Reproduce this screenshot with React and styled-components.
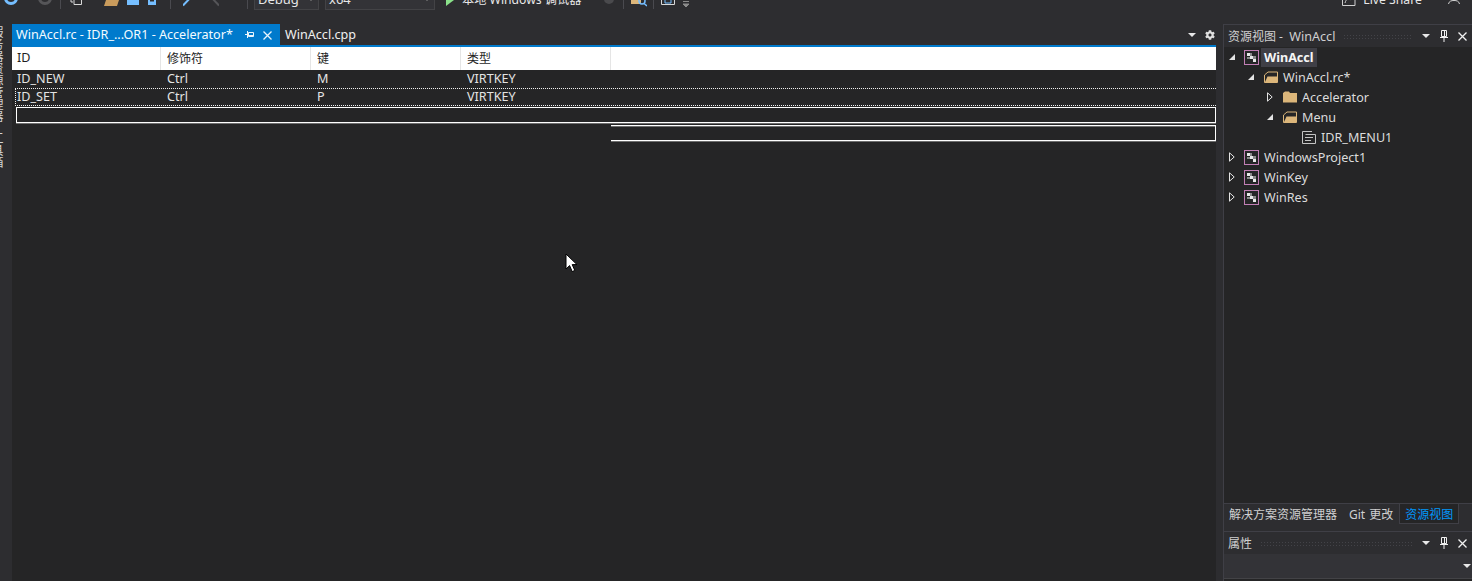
import React from "react";
import styled, { createGlobalStyle } from "styled-components";
import { FaCog } from "react-icons/fa";

const GlobalStyle = createGlobalStyle`
  html, body {
    margin: 0;
    padding: 0;
    background: #2d2d30;
  }
  * {
    box-sizing: border-box;
  }
`;

const columns = ["ID", "修饰符", "键", "类型"];
const accelerators = [
  { id: "ID_NEW", mod: "Ctrl", key: "M", type: "VIRTKEY" },
  { id: "ID_SET", mod: "Ctrl", key: "P", type: "VIRTKEY", focused: true },
];

const Arrow = ({ open }) => (
  <svg width="8" height="10" viewBox="0 0 8 10">
    {open ? (
      <path d="M7 2V8H1Z" fill="#e4e4e4" />
    ) : (
      <path d="M1.5 0.8L6.2 5L1.5 9.2Z" fill="none" stroke="#e4e4e4" />
    )}
  </svg>
);

const ProjectIcon = () => (
  <svg width="15" height="15" viewBox="0 0 15 15">
    <rect x="0.5" y="0.5" width="14" height="14" fill="#252526" stroke="#c27fb5" />
    <path d="M3 3h3v3H3zM6 6h3v3H6zM9 9h3v3H9z" fill="#e8e8e8" />
    <path d="M6 3h2v3H6zM9 6h3v3H9zM3 7h3v2H3z" fill="#8a8a8a" />
  </svg>
);

const OpenFolder = () => (
  <svg width="14" height="12" viewBox="0 0 14 12">
    <path d="M0.5 11.5V4L4 1H13.5V11.5Z" fill="none" stroke="#dcb67a" />
    <path d="M1 11L3.5 5.5H13V11Z" fill="#dcb67a" />
  </svg>
);

const ClosedFolder = () => (
  <svg width="14" height="12" viewBox="0 0 14 12">
    <path d="M0 11.5V2L2 0.5H6L7 2H14V11.5Z" fill="#dcb67a" />
  </svg>
);

const MenuIcon = () => (
  <svg width="14" height="13" viewBox="0 0 14 13">
    <path d="M0.5 0.5H10M3.5 3.5H13.5V12.5H0.5V0.5M3 6.5H11M3 9.5H9" fill="none" stroke="#c4c4c4" />
  </svg>
);

const DropArrow = ({ color = "#e8e8e8" }) => (
  <svg width="8" height="4" viewBox="0 0 8 4">
    <path d="M0 0H8L4 4Z" fill={color} />
  </svg>
);

const PinIcon = () => (
  <svg width="8" height="12" viewBox="0 0 8 12">
    <path d="M1.5 0.5H6.5V6.5H1.5ZM0 7.5H8M4 8V12M4.5 1V6" fill="none" stroke="#f1f1f1" />
  </svg>
);

const TabPinIcon = () => (
  <svg width="10" height="8" viewBox="0 0 10 8">
    <path d="M3.5 1.5H8.5V5.5H3.5ZM2.5 0V7M0 3.5H3M3.5 4.5H8.5" fill="none" stroke="#e8f4fc" />
  </svg>
);

const CloseIcon = ({ size = 9, color = "#f1f1f1" }) => (
  <svg width={size} height={size} viewBox="0 0 9 9">
    <path d="M0.5 0.5L8.5 8.5M8.5 0.5L0.5 8.5" stroke={color} strokeWidth="1.3" />
  </svg>
);

const Cursor = () => (
  <svg width="13" height="20" viewBox="0 0 13 20">
    <path
      d="M1 1V16L4.6 12.6L7.2 18.6L9.8 17.4L7.2 11.6H12Z"
      fill="#fff"
      stroke="#000"
      strokeWidth="1"
    />
  </svg>
);

const Page = styled.div`
  position: relative;
  display: flex;
  flex-direction: column;
  width: 1472px;
  height: 581px;
  overflow: hidden;
  background: #2d2d30;
  color: #f1f1f1;
  font-family: "Noto Sans", "Noto Sans CJK SC", sans-serif;
  font-size: 12px;
`;

const Toolbar = styled.div`
  flex: 0 0 24px;
  overflow: hidden;
`;

const ToolbarRow = styled.div`
  display: flex;
  align-items: center;
  height: 20px;
  margin-top: -10px;
`;

const ToolSlot = styled.div`
  display: flex;
  align-items: center;
  justify-content: center;
  flex: 0 0 auto;
  width: ${(p) => p.$w}px;
  margin-left: ${(p) => p.$ml || 0}px;
`;

const ToolSep = styled.div`
  flex: 0 0 1px;
  height: 18px;
  margin-left: ${(p) => p.$ml}px;
  background: #4a4a4f;
`;

const Combo = styled.div`
  flex: 0 0 auto;
  display: flex;
  align-items: center;
  justify-content: space-between;
  width: ${(p) => p.$w}px;
  height: 20px;
  margin-left: ${(p) => p.$ml}px;
  padding: 0 3px 2px 3px;
  border: 1px solid #434346;
  background: #333337;
  color: #e6e6e6;
  font-size: 13px;
`;

const ToolText = styled.span`
  flex: 0 0 auto;
  margin-left: ${(p) => p.$ml}px;
  padding-bottom: 2px;
  color: ${(p) => p.$color || "#e8e8e8"};
  font-size: 12.2px;
  white-space: nowrap;
`;

const Workspace = styled.div`
  display: flex;
  flex: 1;
  min-height: 0;
`;

const SideStrip = styled.div`
  flex: 0 0 12px;
  overflow: hidden;
  padding-top: 2px;
`;

const SideLabel = styled.div`
  writing-mode: vertical-rl;
  width: 16px;
  margin-left: -12px;
  margin-bottom: 10px;
  color: #d4d4d4;
  font-size: 12px;
  line-height: 16px;
`;

const Editor = styled.div`
  flex: 0 0 1204px;
  display: flex;
  flex-direction: column;
`;

const TabStrip = styled.div`
  display: flex;
  align-items: center;
  flex: 0 0 23px;
  border-bottom: 2px solid #007acc;
  font-size: 12.6px;
`;

const ActiveTab = styled.div`
  display: flex;
  align-items: center;
  width: 268px;
  height: 21px;
  padding-left: 4px;
  background: #007acc;
  color: #f4fbff;
  white-space: nowrap;
`;

const TabPin = styled.span`
  display: flex;
  margin-left: 12px;
`;

const TabClose = styled.span`
  display: flex;
  margin-left: 8px;
  margin-top: 2px;
`;

const PlainTab = styled.div`
  margin-left: 5px;
  color: #f1f1f1;
`;

const TabTools = styled.div`
  display: flex;
  align-items: center;
  gap: 9px;
  margin-left: auto;
  padding-right: 1px;
`;

const tableGrid = "149px 150px 150px 150px 1fr";

const HeaderRow = styled.div`
  display: grid;
  grid-template-columns: ${tableGrid};
  flex: 0 0 23px;
  background: #fff;
  color: #1e1e1e;
`;

const HeaderCell = styled.div`
  display: flex;
  align-items: center;
  padding: 0 0 2px 6px;
  border-right: 1px solid #e5e5e5;
  &:first-child {
    padding-left: 5px;
    font-size: 12.6px;
  }
`;

const HeaderFill = styled.div``;

const DataRow = styled.div`
  position: relative;
  display: grid;
  grid-template-columns: ${tableGrid};
  height: 18px;
  line-height: 18px;
  font-size: 12.6px;
  color: #e4e4e4;
  ${(p) =>
    p.$focused &&
    `&::after {
      content: "";
      position: absolute;
      inset: 0 0 0 3px;
      border: 1px dotted #f1f1f1;
      border-right: 0;
    }`}
`;

const DataCell = styled.div`
  padding-left: 6px;
  &:first-child {
    padding-left: 5px;
  }
`;

const EditRect = styled.div`
  height: 16px;
  margin: 1px 0 0 4px;
  border: 1px solid #fff;
  box-shadow: 0 1px 0 #6e6e6e;
`;

const EditTail = styled.div`
  height: 16px;
  margin: 2px 0 0 599px;
  border: 1px solid #fff;
  border-left: 0;
  box-shadow: 0 1px 0 #6e6e6e, inset 0 1px 0 #6e6e6e;
`;

const EditorBody = styled.div`
  flex: 1;
  background: #252526;
`;

const Gutter = styled.div`
  flex: 0 0 7px;
`;

const SidePanels = styled.div`
  flex: 1;
  display: flex;
  flex-direction: column;
  border-left: 1px solid #3f3f46;
`;

const PanelHeader = styled.div`
  display: flex;
  align-items: center;
  flex: 0 0 ${(p) => p.$h}px;
  padding: 0 5px 0 4px;
  border-top: 1px solid #3f3f46;
  color: #d0d0d0;
  white-space: nowrap;
`;

const TitleLatin = styled.span`
  margin-left: 3px;
  font-size: 12.6px;
`;

const Gripper = styled.div`
  flex: 1;
  height: 5px;
  margin: 0 10px 0 8px;
  background-image: radial-gradient(#434348 0.7px, transparent 0.8px);
  background-size: 3px 3px;
`;

const PanelTools = styled.div`
  display: flex;
  align-items: center;
  gap: 10px;
`;

const Tree = styled.div`
  flex: 1;
  background: #252526;
  font-size: 12.6px;
`;

const TreeRow = styled.div`
  display: flex;
  align-items: center;
  height: 20px;
  padding-left: ${(p) => 4 + p.$level * 19}px;
  color: #dcdcdc;
`;

const ArrowSlot = styled.span`
  display: flex;
  justify-content: center;
  flex: 0 0 8px;
`;

const IconSlot = styled.span`
  display: flex;
  justify-content: center;
  flex: 0 0 15px;
  margin-left: 8px;
`;

const TreeLabel = styled.span`
  margin-left: 2px;
  padding: 0 3px;
  line-height: 19px;
  font-weight: ${(p) => (p.$selected ? 700 : 400)};
  background: ${(p) => (p.$selected ? "#3f3f46" : "transparent")};
  color: ${(p) => (p.$selected ? "#f6f6f6" : "#dcdcdc")};
`;

const BottomTabs = styled.div`
  display: flex;
  flex: 0 0 21px;
  border-top: 1px solid #3f3f46;
  margin-bottom: 7px;
  word-spacing: 1px;
`;

const BottomTab = styled.div`
  display: flex;
  align-items: center;
  padding: 0 6px 0 ${(p) => (p.$first ? 5 : 6)}px;
  color: ${(p) => (p.$active ? "#0097fb" : "#d0d0d0")};
  background: ${(p) => (p.$active ? "#252526" : "transparent")};
  box-shadow: ${(p) => (p.$active ? "inset 0 0 0 1px #3f3f46" : "none")};
  margin-top: -1px;
  white-space: nowrap;
`;

const PropertyCombo = styled.div`
  display: flex;
  align-items: center;
  justify-content: flex-end;
  flex: 0 0 24px;
  background: #333337;
  svg {
    margin-right: 1px;
  }
`;

const PanelFoot = styled.div`
  flex: 0 0 3px;
  border-top: 1px solid #434346;
  background: #252526;
`;

const MouseCursor = styled.div`
  position: absolute;
  left: 565px;
  top: 253px;
  line-height: 0;
`;

const App = () => {
  return (
    <Page>
      <GlobalStyle />
      <Toolbar>
        <ToolbarRow>
          <ToolSlot $w={18} $ml={2}>
            <svg width="16" height="16" viewBox="0 0 16 16">
              <circle cx="8" cy="6" r="7" fill="#75beff" />
              <path d="M5 6a3 3 0 0 0 6 0" fill="none" stroke="#2d2d30" strokeWidth="2" />
            </svg>
          </ToolSlot>
          <ToolSlot $w={14} $ml={18}>
            <svg width="14" height="16" viewBox="0 0 14 16">
              <circle cx="7" cy="6" r="7" fill="#555558" />
              <path d="M4 6a3 3 0 0 0 6 0" fill="none" stroke="#2d2d30" strokeWidth="2" />
            </svg>
          </ToolSlot>
          <ToolSep $ml={8} />
          <ToolSlot $w={12} $ml={9}>
            <svg width="12" height="20" viewBox="0 0 12 20">
              <path d="M4 6.5V14.5H11.5V6.5ZM0 11H2V13" fill="none" stroke="#d8d8d8" />
            </svg>
          </ToolSlot>
          <ToolSlot $w={15} $ml={22}>
            <svg width="15" height="20" viewBox="0 0 15 20">
              <path d="M0 16L2 10H15L13 16Z" fill="#c99b5c" />
              <path d="M1 10V4H13V10Z" fill="#dcb67a" />
            </svg>
          </ToolSlot>
          <ToolSlot $w={12} $ml={8}>
            <svg width="12" height="20" viewBox="0 0 12 20">
              <path d="M0 5H12V15H0Z" fill="#75beff" />
            </svg>
          </ToolSlot>
          <ToolSlot $w={8} $ml={9}>
            <svg width="8" height="20" viewBox="0 0 8 20">
              <path d="M0 5H8V15H0Z" fill="#75beff" />
              <path d="M2 9H6V11.5H2Z" fill="#2d2d30" />
            </svg>
          </ToolSlot>
          <ToolSep $ml={14} />
          <ToolSlot $w={10} $ml={12}>
            <svg width="10" height="20" viewBox="0 0 10 20">
              <path d="M0 15.5L10 5" stroke="#75beff" strokeWidth="2" fill="none" />
            </svg>
          </ToolSlot>
          <ToolSlot $w={10} $ml={16}>
            <svg width="10" height="20" viewBox="0 0 10 20">
              <path d="M10 15.5L2 7" stroke="#555558" strokeWidth="2" fill="none" />
            </svg>
          </ToolSlot>
          <ToolSep $ml={28} />
          <Combo $w={65} $ml={6}>
            Debug
            <DropArrow color="#888" />
          </Combo>
          <Combo $w={110} $ml={6}>
            x64
            <DropArrow color="#888" />
          </Combo>
          <ToolSlot $w={8} $ml={11}>
            <svg width="8" height="20" viewBox="0 0 8 20">
              <path d="M0 3L8 10L0 16Z" fill="#8ae28a" />
            </svg>
          </ToolSlot>
          <ToolText $ml={8}>本地 Windows 调试器</ToolText>
          <ToolSlot $w={10} $ml={23}>
            <svg width="10" height="20" viewBox="0 0 10 20">
              <circle cx="5" cy="9" r="5" fill="#4a4a4d" />
            </svg>
          </ToolSlot>
          <ToolSep $ml={9} />
          <ToolSlot $w={16} $ml={7}>
            <svg width="16" height="20" viewBox="0 0 16 20">
              <path d="M0 5H10V14H0Z" fill="#dcb67a" />
              <circle cx="11" cy="11" r="3" fill="none" stroke="#75beff" strokeWidth="1.5" />
              <path d="M13 13.5L16 16" stroke="#75beff" strokeWidth="1.5" />
            </svg>
          </ToolSlot>
          <ToolSep $ml={6} />
          <ToolSlot $w={14} $ml={7}>
            <svg width="14" height="20" viewBox="0 0 14 20">
              <path d="M0.5 5H13.5V14.5H0.5Z" fill="none" stroke="#d8d8d8" />
              <path d="M4 9H10V13H4Z" fill="none" stroke="#75beff" />
            </svg>
          </ToolSlot>
          <ToolSlot $w={6} $ml={8}>
            <svg width="6" height="20" viewBox="0 0 6 20">
              <path d="M0 11.5H6M0 14H6L3 17Z" stroke="#8a8a8a" fill="#8a8a8a" strokeWidth="1" />
            </svg>
          </ToolSlot>
          <ToolSlot $w={14} $ml={653}>
            <svg width="14" height="20" viewBox="0 0 14 20">
              <path d="M0.5 4V15.5H13V8M3 13C4 9 7 7 11 7M8 4L11.5 7L8 10" fill="none" stroke="#d0d0d0" />
            </svg>
          </ToolSlot>
          <ToolText $ml={7}>Live Share</ToolText>
          <ToolSlot $w={12} $ml={26}>
            <svg width="12" height="20" viewBox="0 0 12 20">
              <circle cx="6" cy="7" r="3.5" fill="none" stroke="#d0d0d0" />
              <path d="M0.5 14C1 11 3.5 10.5 6 10.5S11 11 11.5 14" fill="none" stroke="#d0d0d0" />
            </svg>
          </ToolSlot>
        </ToolbarRow>
      </Toolbar>

      <Workspace>
        <SideStrip>
          <SideLabel>服务器资源管理器</SideLabel>
          <SideLabel>工具箱</SideLabel>
        </SideStrip>

        <Editor>
          <TabStrip>
            <ActiveTab>
              WinAccl.rc - IDR_...OR1 - Accelerator*
              <TabPin>
                <TabPinIcon />
              </TabPin>
              <TabClose>
                <CloseIcon size={9} color="#e8f4fc" />
              </TabClose>
            </ActiveTab>
            <PlainTab>WinAccl.cpp</PlainTab>
            <TabTools>
              <DropArrow />
              <FaCog size={10} color="#e0e0e0" />
            </TabTools>
          </TabStrip>
          <HeaderRow>
            {columns.map((c) => (
              <HeaderCell key={c}>{c}</HeaderCell>
            ))}
            <HeaderFill />
          </HeaderRow>
          <EditorBody>
            {accelerators.map((a) => (
              <DataRow key={a.id} $focused={a.focused}>
                <DataCell>{a.id}</DataCell>
                <DataCell>{a.mod}</DataCell>
                <DataCell>{a.key}</DataCell>
                <DataCell>{a.type}</DataCell>
              </DataRow>
            ))}
            <EditRect />
            <EditTail />
          </EditorBody>
        </Editor>

        <Gutter />

        <SidePanels>
          <PanelHeader $h={23}>
            资源视图 - <TitleLatin>&nbsp;WinAccl</TitleLatin>
            <Gripper />
            <PanelTools>
              <DropArrow />
              <PinIcon />
              <CloseIcon />
            </PanelTools>
          </PanelHeader>
          <Tree>
            <TreeRow $level={0}>
              <ArrowSlot>
                <Arrow open />
              </ArrowSlot>
              <IconSlot>
                <ProjectIcon />
              </IconSlot>
              <TreeLabel $selected>WinAccl</TreeLabel>
            </TreeRow>
            <TreeRow $level={1}>
              <ArrowSlot>
                <Arrow open />
              </ArrowSlot>
              <IconSlot>
                <OpenFolder />
              </IconSlot>
              <TreeLabel>WinAccl.rc*</TreeLabel>
            </TreeRow>
            <TreeRow $level={2}>
              <ArrowSlot>
                <Arrow />
              </ArrowSlot>
              <IconSlot>
                <ClosedFolder />
              </IconSlot>
              <TreeLabel>Accelerator</TreeLabel>
            </TreeRow>
            <TreeRow $level={2}>
              <ArrowSlot>
                <Arrow open />
              </ArrowSlot>
              <IconSlot>
                <OpenFolder />
              </IconSlot>
              <TreeLabel>Menu</TreeLabel>
            </TreeRow>
            <TreeRow $level={3}>
              <ArrowSlot />
              <IconSlot>
                <MenuIcon />
              </IconSlot>
              <TreeLabel>IDR_MENU1</TreeLabel>
            </TreeRow>
            {["WindowsProject1", "WinKey", "WinRes"].map((name) => (
              <TreeRow key={name} $level={0}>
                <ArrowSlot>
                  <Arrow />
                </ArrowSlot>
                <IconSlot>
                  <ProjectIcon />
                </IconSlot>
                <TreeLabel>{name}</TreeLabel>
              </TreeRow>
            ))}
          </Tree>
          <BottomTabs>
            <BottomTab $first>解决方案资源管理器</BottomTab>
            <BottomTab>Git 更改</BottomTab>
            <BottomTab $active>资源视图</BottomTab>
          </BottomTabs>
          <PanelHeader $h={23}>
            属性
            <Gripper />
            <PanelTools>
              <DropArrow />
              <PinIcon />
              <CloseIcon />
            </PanelTools>
          </PanelHeader>
          <PropertyCombo>
            <DropArrow />
          </PropertyCombo>
          <PanelFoot />
        </SidePanels>
      </Workspace>

      <MouseCursor>
        <Cursor />
      </MouseCursor>
    </Page>
  );
};

export default App;
